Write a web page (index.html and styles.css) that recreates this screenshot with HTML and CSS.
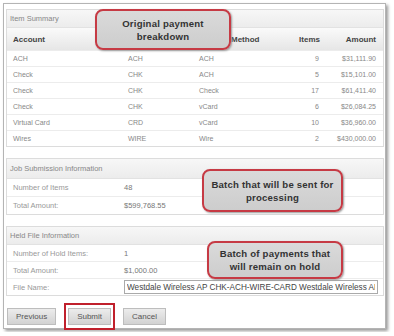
FILE: index.html
```html
<!doctype html>
<html lang="en">
<head>
    <meta charset="utf-8">
    <title>Job Submission</title>
    <link rel="stylesheet" href="styles.css">
</head>
<body>
<div class="frame">
    <div class="panel">
        <div class="panel-title">Item Summary</div>
        <table class="items">
            <colgroup>
                <col class="w1"><col class="w2"><col class="w3"><col class="w4"><col>
            </colgroup>
            <tr class="head">
                <th>Account</th>
                <th></th>
                <th class="method">Method</th>
                <th class="num">Items</th>
                <th class="num">Amount</th>
            </tr>
            <tr><td>ACH</td><td>ACH</td><td>ACH</td><td class="num">9</td><td class="num">$31,111.90</td></tr>
            <tr><td>Check</td><td>CHK</td><td>ACH</td><td class="num">5</td><td class="num">$15,101.00</td></tr>
            <tr><td>Check</td><td>CHK</td><td>Check</td><td class="num">17</td><td class="num">$61,411.40</td></tr>
            <tr><td>Check</td><td>CHK</td><td>vCard</td><td class="num">6</td><td class="num">$26,084.25</td></tr>
            <tr><td>Virtual Card</td><td>CRD</td><td>vCard</td><td class="num">10</td><td class="num">$36,960.00</td></tr>
            <tr><td>Wires</td><td>WIRE</td><td>Wire</td><td class="num">2</td><td class="num">$430,000.00</td></tr>
        </table>
    </div>

    <div class="panel job">
        <div class="panel-title">Job Submission Information</div>
        <table class="info">
            <tr><td class="label">Number of Items</td><td>48</td></tr>
            <tr><td class="label">Total Amount:</td><td>$599,768.55</td></tr>
        </table>
    </div>

    <div class="panel held">
        <div class="panel-title">Held File Information</div>
        <table class="info">
            <tr><td class="label">Number of Hold Items:</td><td>1</td></tr>
            <tr><td class="label">Total Amount:</td><td>$1,000.00</td></tr>
            <tr><td class="label">File Name:</td><td><input type="text" class="file" value="Westdale Wireless AP CHK-ACH-WIRE-CARD Westdale Wireless AP.txt"></td></tr>
        </table>
    </div>

    <div class="buttons">
        <button class="btn">Previous</button>
        <span class="mark"><button class="btn">Submit</button></span>
        <button class="btn">Cancel</button>
    </div>

    <div class="callout callout-1">Original payment<br>breakdown</div>
    <div class="callout callout-2">Batch that will be sent for<br>processing</div>
    <div class="callout callout-3">Batch of payments that<br>will remain on hold</div>
</div>
</body>
</html>
```

FILE: styles.css
```css
body {
    margin: 0;
    background: #fff;
    font-family: "Liberation Sans", Arial, sans-serif;
}
.frame {
    position: relative;
    margin: 3px;
    width: 383px;
    height: 326px;
    padding: 5px 0 0 2px;
    box-sizing: border-box;
    border: 1px solid #b4b4b4;
    box-shadow: 2px 2px 3px #9a9a9a;
}
.panel {
    width: 378px;
    border: 1px solid #dcdcdc;
    box-sizing: border-box;
}
.panel-title {
    height: 17px;
    line-height: 17px;
    padding-left: 3px;
    font-size: 7.5px;
    color: #888;
    background: linear-gradient(#f7f7f7, #ececec);
    border-bottom: 1px solid #e2e2e2;
}
table {
    width: 100%;
    border-collapse: collapse;
}
.items {
    table-layout: fixed;
}
.items .w1 { width: 115px; }
.items .w2 { width: 71px; }
.items .w3 { width: 100px; }
.items .w4 { width: 30px; }
.items th {
    height: 22px;
    text-align: left;
    font-size: 8px;
    font-weight: bold;
    color: #444;
    background: linear-gradient(#fafafa, #e6e6e6);
}
.items td {
    height: 15px;
    font-size: 7px;
    color: #888;
    border-top: 1px solid #ececec;
    white-space: nowrap;
}
.items th, .items td {
    padding: 0 0 0 6px;
}
.items .method {
    padding-left: 38px;
}
.items .num {
    text-align: right;
    padding: 0 7px 0 0;
}
.items th:nth-child(4), .items td:nth-child(4) {
    padding-right: 3px;
}
.items td:nth-child(4) {
    padding-right: 4px;
}
.job, .held {
    margin-top: 11px;
}
.job .panel-title {
    height: 19px;
    line-height: 19px;
}
.info td {
    height: 17px;
    font-size: 7.5px;
    color: #777;
    border-top: 1px solid #ececec;
    padding: 0;
}
.info tr:first-child td {
    border-top: none;
}
.info .label {
    width: 111px;
    padding-left: 6px;
    color: #999;
}
.held .info td {
    height: 16px;
}
.file {
    width: 254px;
    height: 14px;
    box-sizing: border-box;
    margin: 0;
    padding: 0 2px;
    border: 1px solid #aaa;
    font-family: "Liberation Sans", Arial, sans-serif;
    font-size: 8.2px;
    color: #444;
}
.buttons {
    display: flex;
    align-items: center;
    gap: 8px;
    margin-top: 12px;
    padding-left: 1px;
}
.btn {
    height: 17px;
    padding: 0 8px;
    border: 1px solid #bdbdbd;
    background: linear-gradient(#ececec, #d2d2d2);
    font-family: "Liberation Sans", Arial, sans-serif;
    font-size: 8px;
    color: #555;
}
.mark {
    display: inline-block;
    margin: -5px 0;
    padding: 3px 2px;
    border: 2px solid #c0202c;
}
.mark .btn {
    display: block;
}
.callout {
    position: absolute;
    box-sizing: border-box;
    border: 2px solid #c63a44;
    border-radius: 8px;
    background: linear-gradient(#dadada, #cdcdcd);
    box-shadow: 1px 1px 2px #999;
    text-align: center;
    font-size: 9.6px;
    font-weight: bold;
    line-height: 12.5px;
    color: #333;
    letter-spacing: 0.2px;
}
.callout-1 {
    left: 91px;
    top: 5px;
    width: 136px;
    height: 41px;
    padding-top: 7px;
}
.callout-2 {
    left: 198px;
    top: 165px;
    width: 141px;
    height: 43px;
    padding-top: 8px;
}
.callout-3 {
    left: 203px;
    top: 237px;
    width: 136px;
    height: 38px;
    padding-top: 5px;
}
```
